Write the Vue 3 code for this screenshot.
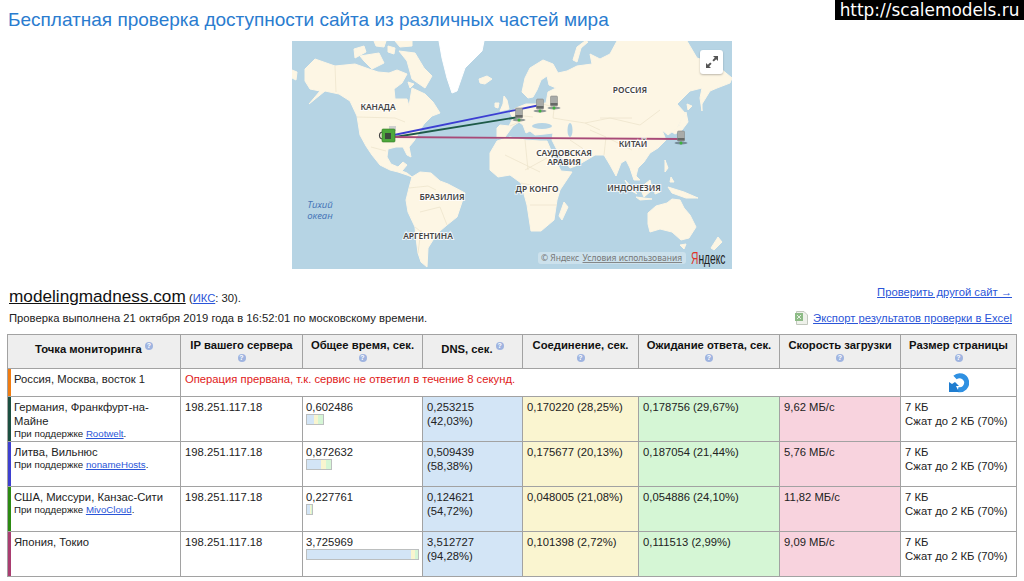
<script setup>
const rows = [
  {
    place: 'Германия, Франкфурт-на-Майне', sponsor: 'Rootwelt', color: '#1b4f40',
    total: '0,602486', barWidth: 18, segs: [42, 28, 30],
    dns: '0,253215 (42,03%)', conn: '0,170220 (28,25%)', wait: '0,178756 (29,67%)', speed: '9,62 МБ/с',
  },
  {
    place: 'Литва, Вильнюс', sponsor: 'nonameHosts', color: '#3d3fd0',
    total: '0,872632', barWidth: 26, segs: [58, 20, 22],
    dns: '0,509439 (58,38%)', conn: '0,175677 (20,13%)', wait: '0,187054 (21,44%)', speed: '5,76 МБ/с',
  },
  {
    place: 'США, Миссури, Канзас-Сити', sponsor: 'MivoCloud', color: '#2c8a12',
    total: '0,227761', barWidth: 7, segs: [55, 21, 24],
    dns: '0,124621 (54,72%)', conn: '0,048005 (21,08%)', wait: '0,054886 (24,10%)', speed: '11,82 МБ/с',
  },
  {
    place: 'Япония, Токио', sponsor: '', color: '#a93d70',
    total: '3,725969', barWidth: 113, segs: [94, 3, 3],
    dns: '3,512727 (94,28%)', conn: '0,101398 (2,72%)', wait: '0,111513 (2,99%)', speed: '9,09 МБ/с',
  },
]
const segColors = ['#d3e5f6', '#f9f5cf', '#d5f6d5']
const servers = [
  [519, 116],
  [540, 107],
  [554, 104],
  [681, 139],
]
</script>

<template>
  <div class="page">
    <div class="watermark">http://scalemodels.ru</div>
    <h1 class="title">Бесплатная проверка доступности сайта из различных частей мира</h1>

    <div class="map">
      <svg width="440" height="228" viewBox="292 41 440 228">
        <rect x="292" y="41" width="440" height="228" fill="#b6d4e4" />
        <g fill="#fdf6e4" stroke="#fdf6e4" stroke-width="1" stroke-linejoin="round">
          <!-- North America -->
          <path d="M305 69 L315 59 L335 66 L355 64 L369 69 L378 72 L389 73 L397 70 L407 74 L402 83 L394 89 L395 99 L407 99 L409 106 L412 88 L425 94 L433 102 L440 113 L432 116 L424 124 L420 130 L417 136 L414 141 L409 147 L411 157 L407 155 L403 147 L396 147 L388 149 L387 157 L391 164 L398 167 L403 162 L407 165 L402 171 L407 173 L412 177 L407 175 L398 172 L390 170 L380 165 L372 155 L366 146 L360 135 L357 116 L350 101 L339 94 L325 91 L309 104 L320 91 L310 89 L305 81 Z" />
          <!-- Arctic islands -->
          <path d="M354 49 L364 46 L366 52 L355 58 Z M360 56 L379 53 L384 63 L372 69 L364 61 Z M399 51 L415 53 L424 68 L432 76 L425 88 L412 79 L407 61 Z M395 41 L412 41 L412 46 L400 47 Z M388 46 L395 48 L394 54 L388 52 Z M374 41 L386 41 L384 47 L376 46 Z M292 70 L297 72 L296 80 L292 78 Z M408 82 L414 84 L410 88 Z" />
          <!-- South America -->
          <path d="M412 177 L420 172 L431 173 L440 181 L448 184 L465 193 L461 205 L457 217 L447 225 L440 231 L433 240 L428 248 L427 267 L421 262 L418 253 L416 238 L415 227 L408 212 L406 200 L409 188 Z" />
          <!-- Eurasia -->
          <path d="M497 128 L500 125 L509 126 L513 118 L510 113 L516 108 L526 104 L536 104 L546 103 L548 92 L556 88 L549 85 L547 76 L541 80 L537 90 L533 97 L528 98 L522 92 L525 78 L530 68 L543 60 L553 64 L558 73 L567 71 L577 66 L592 64 L590 54 L600 59 L610 54 L617 41 L687 41 L697 58 L715 64 L732 78 L730 83 L717 88 L710 91 L702 104 L702 111 L700 98 L702 88 L690 91 L683 98 L677 104 L685 113 L677 128 L668 135 L662 130 L666 140 L658 148 L650 153 L644 162 L638 168 L636 176 L640 180 L634 180 L630 168 L626 160 L621 163 L616 176 L610 165 L604 155 L595 155 L590 158 L578 165 L570 168 L562 158 L556 148 L552 140 L553 133 L545 134 L535 135 L530 131 L526 133 L523 125 L519 122 L513 126 L505 137 L497 138 Z" />
          <!-- Africa -->
          <path d="M490 153 L497 141 L510 137 L525 140 L540 141 L547 141 L553 155 L561 171 L572 172 L560 190 L557 200 L554 220 L541 231 L531 231 L527 205 L521 183 L510 175 L498 177 L490 170 Z" />
          <!-- Australia -->
          <path d="M648 213 L656 206 L667 203 L672 199 L680 200 L684 208 L690 215 L696 227 L689 238 L681 240 L672 232 L660 229 L650 232 L648 224 Z" />
          <!-- Iceland and the British Isles -->
          <path d="M479 79 L487 76 L492 79 L485 84 L480 83 Z M504 96 L507 100 L509 109 L500 111 L503 104 Z M495 103 L499 103 L498 108 L495 107 Z" />
          <!-- Japan, Sakhalin -->
          <path d="M682 118 L686 112 L688 122 L682 130 L675 134 L672 132 L679 126 Z M687 104 L692 106 L688 110 Z" />
          <!-- Indonesia, Madagascar, New Zealand -->
          <path d="M625 180 L632 188 L637 194 L630 190 Z M640 188 L650 180 L652 190 L644 197 Z M636 197 L652 199 L640 200 Z M654 184 L660 192 L655 194 Z M668 187 L684 192 L698 198 L686 198 L672 193 Z M564 202 L568 207 L562 220 L559 216 Z M718 237 L722 242 L714 250 L711 248 Z M680 245 L686 244 L684 249 Z M665 160 L668 168 L665 172 Z M671 177 L674 182 L670 182 Z" />
          <!-- Novaya Zemlya -->
          <path d="M585 41 L588 42 L581 48 L577 62 L573 60 L577 47 Z" />
        </g>
        <path d="M439 41 H484 L482 51 L465 68 L457 91 L452 93 L447 78 L442 58 Z" fill="#ffffff" stroke="#ffffff" stroke-linejoin="round" />
        <g fill="#b6d4e4">
          <ellipse cx="542" cy="126" rx="10" ry="3" />
          <ellipse cx="570" cy="130" rx="2.5" ry="7" />
        </g>
        <g fill="none" stroke="#eee4cd" stroke-width="0.8">
          <path d="M357 117 L395 118 L405 122 M335 66 L336 92 M371 147 L386 151 M409 188 L428 186 L436 190 M420 212 L440 207 L447 225 M421 230 L418 253 M415 227 L425 235" />
          <path d="M555 100 L553 118 L565 120 L585 123 L610 118 L640 125 L660 110 M540 103 L556 108 M515 115 L533 117 M510 126 L524 120 M590 130 L606 137 L604 155 M585 123 L600 130 M608 138 L632 150" />
          <path d="M505 155 L540 172 M525 140 L528 170 M547 158 L525 170 M521 183 L555 190 M530 205 L557 205 M570 140 L585 150 M600 118 L632 118" />
        </g>

        <g fill="none" stroke-width="1.8">
          <path d="M389 136 L540 105" stroke="#3c3ed2" />
          <path d="M389 138 L519 117" stroke="#1e5a48" />
          <path d="M389 137 L681 139" stroke="#a84a78" />
        </g>

        <g v-for="[x, y] in servers" :key="x">
          <ellipse :cx="x" :cy="y + 4" rx="6.5" ry="1.4" fill="#4a5a66" opacity="0.6" />
          <rect :x="x - 3.5" :y="y - 8" width="7" height="10" rx="1" fill="#a9aba8" stroke="#7d7f7d" stroke-width="0.5" />
          <rect :x="x - 3.5" :y="y - 1" width="7" height="2.5" fill="#666866" />
          <circle :cx="x" :cy="y + 4" r="1.5" fill="#3cb33c" />
        </g>

        <rect x="389" y="126" width="7" height="5" fill="#cfcfcf" />
        <path d="M383 132 A3 3 0 1 0 383 139" fill="none" stroke="#444" stroke-width="1.2" />
        <rect x="382" y="129" width="13" height="13" rx="1" fill="#4da83c" stroke="#2f7a24" stroke-width="0.6" />
        <rect x="385" y="133" width="6" height="6" fill="#3d4a3d" />

        <g class="labels">
          <text x="378" y="110">КАНАДА</text>
          <text x="630" y="93">РОССИЯ</text>
          <text x="564" y="156">САУДОВСКАЯ</text>
          <text x="564" y="164.5">АРАВИЯ</text>
          <text x="633" y="147">КИТАЙ</text>
          <text x="537" y="192">ДР КОНГО</text>
          <text x="634" y="191">ИНДОНЕЗИЯ</text>
          <text x="442" y="200">БРАЗИЛИЯ</text>
          <text x="428" y="239">АРГЕНТИНА</text>
        </g>
        <g class="ocean">
          <text x="320" y="208">Тихий</text>
          <text x="320" y="219">океан</text>
        </g>

        <rect x="538" y="252" width="148" height="12" rx="3" fill="#ffffff" opacity="0.3" />
        <text class="copyright" x="541" y="261">© Яндекс <tspan text-decoration="underline" dx="1">Условия использования</tspan></text>
        <text class="yandex" transform="translate(691 264) scale(0.64 1)"><tspan fill="#e0342a">Я</tspan>ндекс</text>
      </svg>
      <button class="fullscreen" aria-label="Во весь экран">
        <svg width="16" height="16" viewBox="0 0 16 16">
          <path d="M9 2 H14 V7 L12.2 5.2 L9.8 7.6 L8.4 6.2 L10.8 3.8 Z M7 14 H2 V9 L3.8 10.8 L6.2 8.4 L7.6 9.8 L5.2 12.2 Z" fill="#555" />
        </svg>
      </button>
    </div>

    <div class="site-row">
      <div><a class="site" href="#">modelingmadness.com</a> <span class="iks">(<a href="#">ИКС</a>: 30).</span></div>
      <a class="link" href="#">Проверить другой сайт →</a>
    </div>
    <div class="info-row">
      <div>Проверка выполнена 21 октября 2019 года в 16:52:01 по московскому времени.</div>
      <div class="export">
        <svg width="13" height="14" viewBox="0 0 13 14">
          <path d="M1.5 .5 H9 L12.5 4 V13.5 H1.5 Z" fill="#eef1ea" stroke="#c2c8be" />
          <rect x="0" y="2" width="8" height="8" fill="#8dbb86" />
          <path d="M2 4 L6 8 M6 4 L2 8" stroke="#e6f0e2" stroke-width="1" />
        </svg>
        <a class="link" href="#">Экспорт результатов проверки в Excel</a>
      </div>
    </div>

    <table class="results">
      <colgroup>
        <col style="width: 173px" />
        <col style="width: 122px" />
        <col style="width: 120px" />
        <col style="width: 100px" />
        <col style="width: 116px" />
        <col style="width: 141px" />
        <col style="width: 121px" />
        <col style="width: 116px" />
      </colgroup>
      <thead>
        <tr>
          <th class="mid">Точка мониторинга <i class="q sup">?</i></th>
          <th>IP вашего сервера<br /><i class="q">?</i></th>
          <th>Общее время, сек.<br /><i class="q">?</i></th>
          <th class="mid">DNS, сек. <i class="q sup">?</i></th>
          <th>Соединение, сек.<br /><i class="q">?</i></th>
          <th>Ожидание ответа, сек.<br /><i class="q">?</i></th>
          <th>Скорость загрузки<br /><i class="q">?</i></th>
          <th>Размер страницы<br /><i class="q">?</i></th>
        </tr>
      </thead>
      <tbody>
        <tr class="short">
          <td class="place" style="box-shadow: inset 3px 0 0 #f07c12">Россия, Москва, восток 1</td>
          <td colspan="6" class="error">Операция прервана, т.к. сервис не ответил в течение 8 секунд.</td>
          <td class="retry">
            <svg width="20" height="20" viewBox="0 0 20 20">
              <path d="M6 4.5 A7 7 0 1 1 9 16.5" fill="none" stroke="#2f90e2" stroke-width="5" />
              <path d="M0 9 L3 11 L6 9 L10 13 L7 13 L10 19 L0 19 Z" fill="#1f7dd0" />
            </svg>
          </td>
        </tr>
        <tr v-for="row in rows" :key="row.place">
          <td class="place" :style="{ boxShadow: `inset 3px 0 0 ${row.color}` }">
            {{ row.place }}
            <div v-if="row.sponsor" class="sponsor">При поддержке <a href="#">{{ row.sponsor }}</a>.</div>
          </td>
          <td>198.251.117.18</td>
          <td class="total">
            {{ row.total }}
            <div class="bar" :style="{ width: row.barWidth + 'px' }">
              <span
                v-for="(seg, i) in row.segs"
                :key="i"
                :style="{ width: seg + '%', background: segColors[i] }"
              ></span>
            </div>
          </td>
          <td class="dns">{{ row.dns }}</td>
          <td class="conn">{{ row.conn }}</td>
          <td class="wait">{{ row.wait }}</td>
          <td class="speed">{{ row.speed }}</td>
          <td>7 КБ<br />Сжат до 2 КБ (70%)</td>
        </tr>
      </tbody>
    </table>
  </div>
</template>

<style scoped>
.page {
  position: relative;
  width: 1024px;
  height: 581px;
  overflow: hidden;
  box-sizing: border-box;
  padding: 8px 8px 0 7px;
  background: #fff;
  color: #222;
  font-family: "Liberation Sans", Arial, sans-serif;
  font-size: 11.25px;
}

.watermark {
  position: absolute;
  top: 0;
  right: 0;
  width: 189px;
  height: 20px;
  background: #000;
  color: #fff;
  font-family: "DejaVu Sans", sans-serif;
  font-size: 16.9px;
  line-height: 20px;
  text-align: center;
  white-space: nowrap;
}

.title {
  margin: 0 0 0 1px;
  height: 25px;
  color: #2a7ccf;
  font-size: 19px;
  font-weight: 400;
  line-height: 24px;
}

.map {
  position: relative;
  width: 440px;
  height: 228px;
  margin: 8px 0 0 285px;
}

.map > svg {
  display: block;
}

.labels text {
  fill: #444;
  stroke: rgba(255, 255, 255, 0.8);
  stroke-width: 2px;
  paint-order: stroke;
  font-family: "Noto Sans", sans-serif;
  font-size: 8.4px;
  font-weight: 600;
  text-anchor: middle;
}

.ocean text {
  fill: #4a78b8;
  font-family: "Noto Sans", sans-serif;
  font-size: 9.6px;
  font-style: italic;
  text-anchor: middle;
}

.copyright {
  fill: #777;
  font-family: "Noto Sans", sans-serif;
  font-size: 8.5px;
}

.yandex {
  fill: #222;
  font-family: "Liberation Sans", sans-serif;
  font-size: 16px;
}

.fullscreen {
  position: absolute;
  top: 9px;
  left: 408px;
  display: flex;
  align-items: center;
  justify-content: center;
  width: 23px;
  height: 24px;
  padding: 0;
  border: 0;
  border-radius: 3px;
  background: #fff;
  box-shadow: 0 1px 2px rgba(0, 0, 0, 0.25);
}

.site-row {
  display: flex;
  align-items: flex-start;
  justify-content: space-between;
  margin: 17px 4px 0 2px;
  height: 23px;
}

.site {
  color: #111;
  font-size: 17.2px;
  line-height: 20px;
}

.iks a,
.link,
.sponsor a {
  color: #2a55d8;
}

.info-row {
  display: flex;
  align-items: center;
  justify-content: space-between;
  margin: 0 4px 0 2px;
  height: 17px;
}

.export {
  display: flex;
  align-items: center;
  gap: 5px;
}

.results {
  margin-top: 8px;
  width: 1009px;
  table-layout: fixed;
  border-collapse: collapse;
  line-height: 14px;
}

.results th,
.results td {
  box-sizing: border-box;
  border: 1px solid #a2a2a2;
  padding: 3px 4px 0;
  vertical-align: top;
}

.results th {
  height: 34px;
  padding: 3px 2px 0;
  background: #eee;
  color: #111;
  font-size: 11.25px;
  font-weight: 700;
  line-height: 14px;
}

.results th.mid {
  vertical-align: middle;
  padding: 0 2px 6px;
}

.results td {
  height: 45px;
}

.results .short td {
  height: 28px;
}

.results .place {
  padding-left: 6px;
}

.results .total {
  padding-left: 3px;
}

.sponsor {
  font-size: 9.7px;
  line-height: 12px;
}

.error {
  color: #e01818;
}

.results .retry {
  padding: 4px 0 0;
  text-align: center;
}

.retry svg {
  display: block;
  margin: 0 auto;
}

.dns {
  background: #d3e5f6;
}

.conn {
  background: #faf5d0;
}

.wait {
  background: #d5f6d5;
}

.speed {
  background: #f8d3de;
}

.bar {
  display: flex;
  box-sizing: border-box;
  height: 11px;
  border: 1px solid #bcbfbf;
}

.bar span {
  display: block;
  height: 100%;
}

.q {
  display: inline-block;
  width: 8px;
  height: 8px;
  border-radius: 50%;
  background: #9fb4e0;
  color: #fff;
  font-size: 7px;
  font-style: normal;
  font-weight: 700;
  line-height: 8px;
  text-align: center;
  vertical-align: top;
  margin-top: 2px;
}

.q.sup {
  margin-top: 0;
}
</style>

<style>
html,
body {
  margin: 0;
  background: #fff;
}
</style>
